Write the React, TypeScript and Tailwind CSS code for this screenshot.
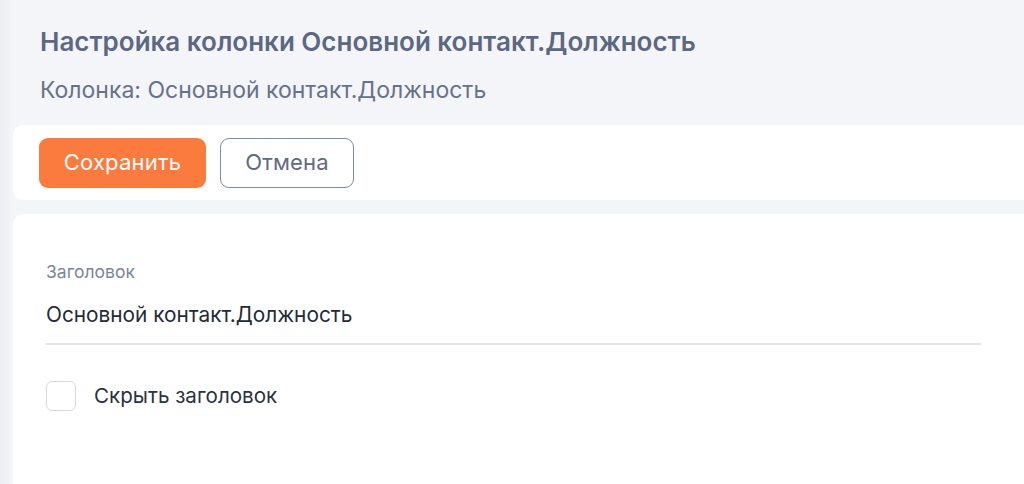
import React, { useState } from "react";

export default function App() {
  const [hidden, setHidden] = useState(false);

  return (
    <div className="relative flex h-[484px] w-[1024px] overflow-hidden bg-[#f4f5f9] font-['Inter',sans-serif]">
      {/* sidebar shadow edge */}
      <div className="w-[10px] shrink-0 bg-gradient-to-r from-[#eceef3] to-[#f2f3f7]" />

      <div className="flex min-w-0 flex-1 flex-col pl-[3px]">
        {/* header */}
        <div className="px-[27px] pt-[26px] pb-[21px]">
          <h1 className="text-[26px] font-semibold leading-[32px] text-[#5c6883]">
            Настройка колонки Основной контакт.Должность
          </h1>
          <p className="mt-[18px] text-[23px] leading-[28px] text-[#66728b]">
            Колонка: Основной контакт.Должность
          </p>
        </div>

        {/* actions card */}
        <div className="-mr-[20px] flex h-[75px] shrink-0 items-center gap-[14px] rounded-[10px] bg-white pl-[26px]">
          <button className="h-[50px] w-[167px] rounded-[9px] bg-[#fb7a3d] text-[22px] tracking-[0.2px] text-white">
            Сохранить
          </button>
          <button className="h-[50px] w-[134px] rounded-[9px] border border-[#7e8ba6] text-[22px] tracking-[0.2px] text-[#5e6a84]">
            Отмена
          </button>
        </div>

        {/* form card */}
        <div className="-mr-[20px] mt-[14px] flex-1 rounded-t-[10px] bg-white pl-[33px] pr-[63px] pt-[47px]">
          <label className="block text-[17.5px] leading-[22px] text-[#7a86a0]">Заголовок</label>
          <div className="mt-[19px] border-b-2 border-[#e2e4ea] pb-[15px] text-[20.8px] leading-[26px] text-[#222b3a]">
            Основной контакт.Должность
          </div>

          <label className="mt-[36px] flex cursor-pointer items-center gap-[18px]">
            <span
              onClick={() => setHidden(!hidden)}
              className="h-[30px] w-[30px] rounded-[6px] border border-[#d6d9e0] bg-white"
            />
            <span className="text-[20.6px] leading-[26px] text-[#2a3342]">Скрыть заголовок</span>
          </label>
        </div>
      </div>
    </div>
  );
}
